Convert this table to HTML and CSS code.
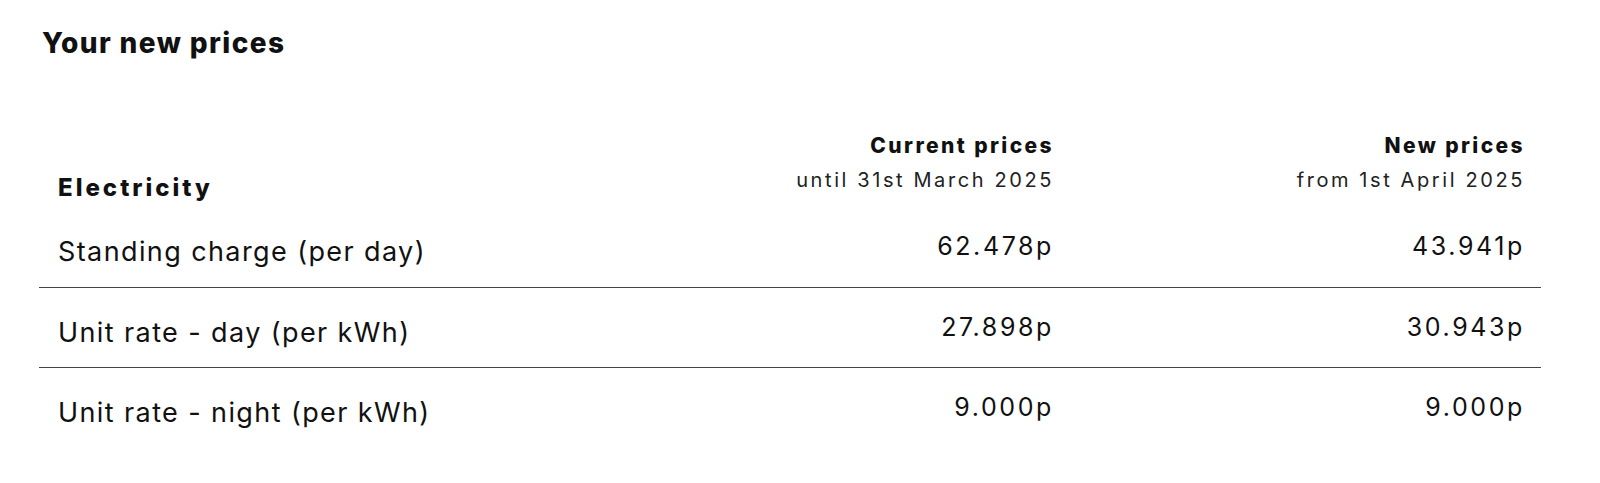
FILE: index.html
```html
<!DOCTYPE html>
<html lang="en">
<head>
<meta charset="utf-8">
<title>Your new prices</title>
<link rel="stylesheet" href="styles.css">
</head>
<body>
<main class="page">
  <h2 class="title">Your new prices</h2>
  <table class="prices">
    <colgroup>
      <col class="col-label">
      <col class="col-current">
      <col class="col-new">
    </colgroup>
    <thead>
      <tr class="head-row">
        <th class="fuel">Electricity</th>
        <th class="period"><span class="period-name">Current prices</span><span class="period-date">until 31st March 2025</span></th>
        <th class="period"><span class="period-name">New prices</span><span class="period-date">from 1st April 2025</span></th>
      </tr>
    </thead>
    <tbody>
      <tr class="row">
        <td class="label">Standing charge (per day)</td>
        <td class="value">62.478p</td>
        <td class="value">43.941p</td>
      </tr>
      <tr class="row">
        <td class="label">Unit rate - day (per kWh)</td>
        <td class="value">27.898p</td>
        <td class="value">30.943p</td>
      </tr>
      <tr class="row last">
        <td class="label">Unit rate - night (per kWh)</td>
        <td class="value">9.000p</td>
        <td class="value">9.000p</td>
      </tr>
    </tbody>
  </table>
</main>
</body>
</html>
```
FILE: styles.css
```css
html, body {
  margin: 0;
  padding: 0;
  background: #ffffff;
}

body {
  font-family: Inter, "Noto Sans", "Liberation Sans", sans-serif;
  color: #111111;
}

.page {
  padding: 26px 59px 0 39px;
}

.title {
  margin: 0 0 0 3px;
  font-size: 28px;
  line-height: 34px;
  font-weight: 800;
  letter-spacing: 1.4px;
}

.prices {
  margin-top: 70px;
  width: 1502px;
  border-collapse: collapse;
  table-layout: fixed;
}

.col-label { width: 561px; }
.col-current { width: 470px; }
.col-new { width: 471px; }

.head-row {
  height: 77px;
}

.head-row th {
  padding: 3px 18px 0 19px;
  vertical-align: top;
}

.head-row th.fuel {
  text-align: left;
  font-size: 24px;
  font-weight: 800;
  line-height: 30px;
  letter-spacing: 3px;
  padding-top: 43px;
}

.period {
  text-align: right;
  font-weight: 400;
}

.period-name {
  display: block;
  font-size: 21px;
  line-height: 26px;
  font-weight: 800;
  letter-spacing: 2.4px;
  margin-right: -2px;
}

.period-date {
  display: block;
  margin-top: 8px;
  margin-right: -2px;
  font-size: 20px;
  line-height: 26px;
  letter-spacing: 2.6px;
  color: #222222;
}

.row {
  height: 80px;
}

.row td {
  border-bottom: 1px solid #454545;
  padding: 0 18px 0 19px;
  vertical-align: top;
}

.row.last td {
  border-bottom: none;
}

.row td.label {
  font-size: 27px;
  line-height: 32px;
  letter-spacing: 1.4px;
  padding-top: 29px;
}

.row td.value {
  text-align: right;
  font-size: 25px;
  line-height: 30px;
  letter-spacing: 2.6px;
  padding-top: 24px;
  padding-right: 16px;
}
```
